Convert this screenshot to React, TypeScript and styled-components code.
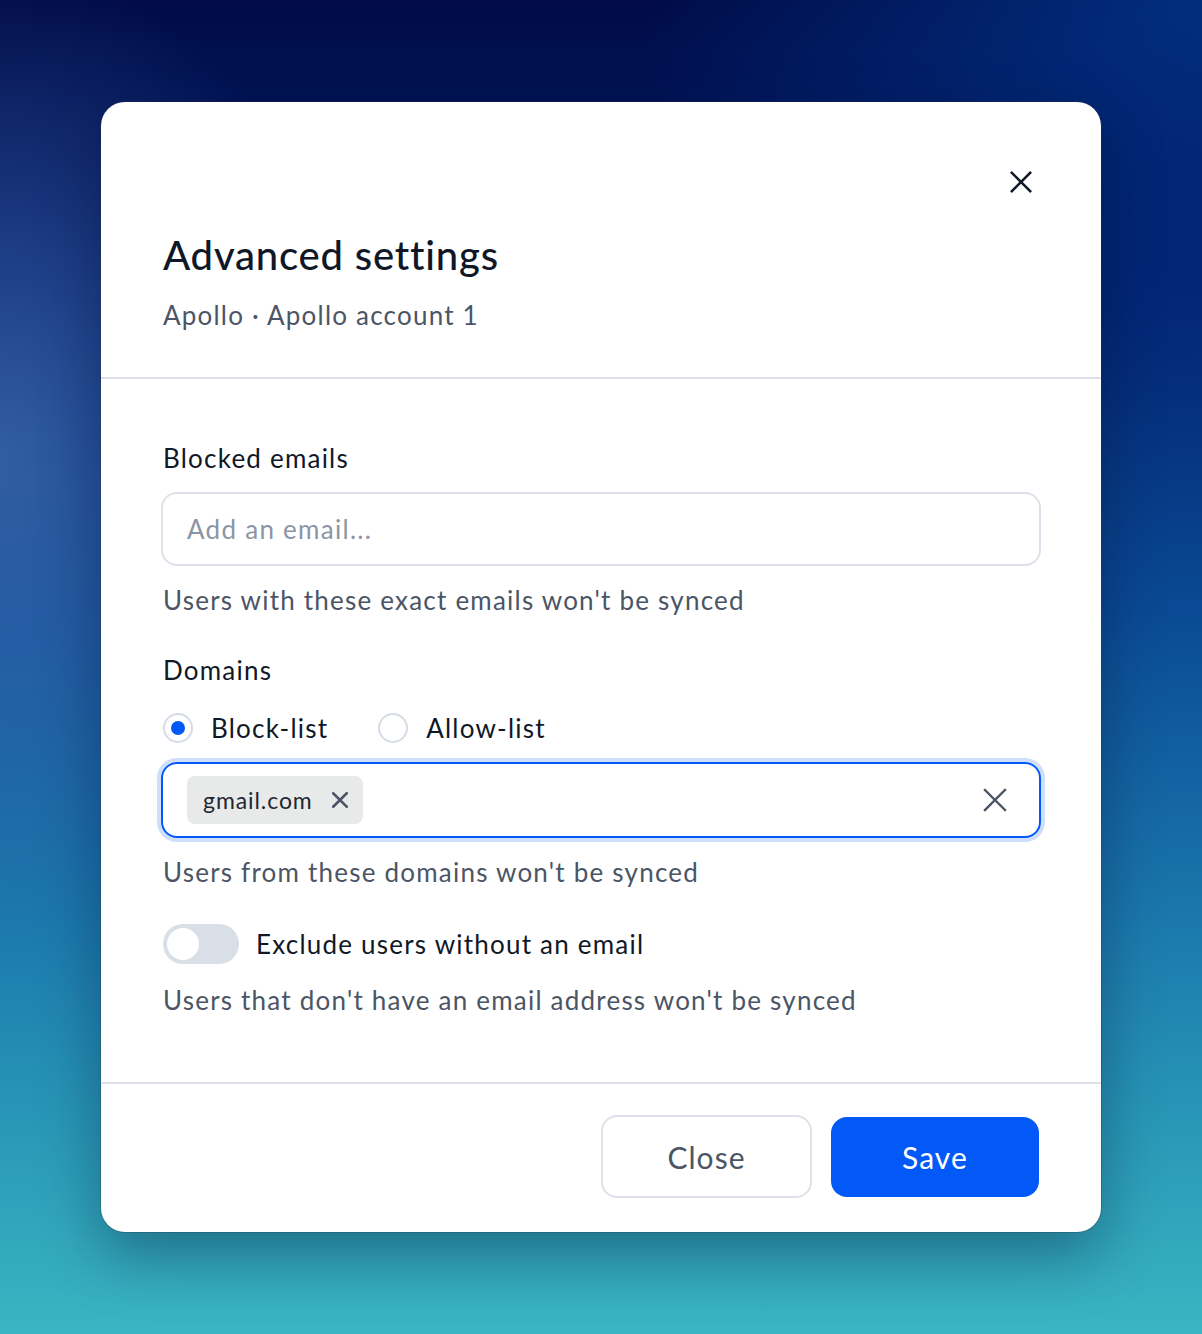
import React, { useState } from "react";
import styled, { createGlobalStyle } from "styled-components";

const GlobalStyle = createGlobalStyle`
  html, body {
    margin: 0;
    padding: 0;
  }
  body {
    font-family: Lato, "Noto Sans", "Liberation Sans", sans-serif;
    letter-spacing: 0.076em;
    -webkit-font-smoothing: antialiased;
  }
  * {
    box-sizing: border-box;
  }
`;

const Backdrop = styled.div`
  min-height: 1334px;
  display: flex;
  align-items: center;
  justify-content: center;
  background:
    radial-gradient(ellipse 520px 700px at 0% 34%, rgba(86, 124, 190, 0.55), rgba(86, 124, 190, 0) 70%),
    radial-gradient(ellipse 700px 500px at 100% 0%, rgba(2, 60, 150, 0.7), rgba(2, 60, 150, 0) 80%),
    linear-gradient(180deg, #000b47 0%, #02226f 22%, #0a4a94 46%, #1a76ac 68%, #2a9bb8 86%, #3ab5c2 100%);
`;

const Modal = styled.div`
  width: 1000px;
  background: #ffffff;
  border-radius: 24px;
  box-shadow: 0 0 0 1px rgba(40, 50, 70, 0.25), 0 24px 60px rgba(0, 10, 40, 0.35);
  display: flex;
  flex-direction: column;
  overflow: hidden;
`;

const Header = styled.header`
  padding: 60px 60px 44px 62px;
  border-bottom: 2px solid #dde2ea;
  display: flex;
  flex-direction: column;
`;

const CloseRow = styled.div`
  display: flex;
  justify-content: flex-end;
`;

const IconButton = styled.button<{ $size: number; $color: string }>`
  width: ${(p) => p.$size}px;
  height: ${(p) => p.$size}px;
  border: 0;
  padding: 0;
  background: transparent;
  color: ${(p) => p.$color};
  display: flex;
  align-items: center;
  justify-content: center;
  cursor: pointer;
  flex-shrink: 0;
`;

const Title = styled.h1`
  margin: 29px 0 0;
  font-size: 40px;
  line-height: 48px;
  font-weight: 500;
  letter-spacing: 0.02em;
  color: #101828;
`;

const Subtitle = styled.div`
  margin-top: 18px;
  font-size: 26px;
  line-height: 36px;
  color: #4b5565;
`;

const Body = styled.div`
  padding: 61px 60px 64px 60px;
  display: flex;
  flex-direction: column;
  gap: 34px;
`;

const Field = styled.div`
  display: flex;
  flex-direction: column;
  gap: 16px;
`;

const Label = styled.div`
  font-size: 26px;
  line-height: 36px;
  color: #101828;
  padding-left: 2px;
`;

const Helper = styled.div`
  font-size: 26px;
  line-height: 36px;
  color: #4b5565;
  padding-left: 2px;
`;

const TextInput = styled.input`
  height: 74px;
  width: 100%;
  border: 2px solid #dde2ea;
  border-radius: 16px;
  padding: 0 24px;
  font-family: inherit;
  font-size: 26px;
  letter-spacing: 0.049em;
  color: #101828;
  outline: none;
  &::placeholder {
    color: #8b95a5;
  }
`;

const RadioGroup = styled.div`
  display: flex;
  align-items: center;
  gap: 50px;
  margin: 9px 0 3px 2px;
`;

const RadioOption = styled.label`
  display: flex;
  align-items: center;
  gap: 18px;
  font-size: 26px;
  line-height: 30px;
  color: #101828;
  cursor: pointer;
`;

const RadioCircle = styled.span<{ $checked: boolean }>`
  width: 30px;
  height: 30px;
  border-radius: 50%;
  border: 2px solid #d6dce6;
  background: #ffffff;
  display: flex;
  align-items: center;
  justify-content: center;
  &::after {
    content: "";
    width: 14px;
    height: 14px;
    border-radius: 50%;
    background: ${(p) => (p.$checked ? "#0058f7" : "transparent")};
  }
`;

const TagInput = styled.div`
  height: 76px;
  border: 2px solid #0058f7;
  border-radius: 16px;
  box-shadow: 0 0 0 4px #cfdffb;
  display: flex;
  align-items: center;
  padding: 0 32px 0 24px;
  gap: 12px;
`;

const Tag = styled.span`
  height: 48px;
  display: inline-flex;
  align-items: center;
  gap: 19px;
  padding: 0 15px 0 16px;
  background: #e8eae9;
  border-radius: 8px;
  font-size: 23px;
  letter-spacing: 0.04em;
  color: #1f2733;
`;

const Spacer = styled.div`
  flex: 1;
`;

const ToggleRow = styled.div`
  display: flex;
  align-items: center;
  gap: 17px;
  font-size: 26px;
  color: #101828;
  padding-left: 2px;
`;

const Toggle = styled.button<{ $on: boolean }>`
  width: 76px;
  height: 40px;
  border: 0;
  border-radius: 20px;
  padding: 4px;
  background: ${(p) => (p.$on ? "#0058f7" : "#d9dfe7")};
  display: flex;
  justify-content: ${(p) => (p.$on ? "flex-end" : "flex-start")};
  cursor: pointer;
  &::after {
    content: "";
    width: 32px;
    height: 32px;
    border-radius: 50%;
    background: #ffffff;
  }
`;

const ToggleField = styled.div`
  display: flex;
  flex-direction: column;
  gap: 18px;
`;

const Footer = styled.footer`
  border-top: 2px solid #dde2ea;
  padding: 31px 62px 34px;
  display: flex;
  justify-content: flex-end;
  align-items: center;
  gap: 19px;
`;

const Button = styled.button<{ $primary?: boolean }>`
  height: ${(p) => (p.$primary ? 80 : 83)}px;
  width: ${(p) => (p.$primary ? 208 : 211)}px;
  border-radius: 16px;
  border: ${(p) => (p.$primary ? "0" : "2px solid #dde2ea")};
  background: ${(p) => (p.$primary ? "#0259f7" : "#ffffff")};
  color: ${(p) => (p.$primary ? "#ffffff" : "#4b5565")};
  font-family: inherit;
  font-size: 30px;
  letter-spacing: 0.035em;
  cursor: pointer;
`;

const XIcon = ({ size, stroke }: { size: number; stroke: number }) => (
  <svg width={size} height={size} viewBox="0 0 24 24" fill="none">
    <path
      d="M2 2L22 22M22 2L2 22"
      stroke="currentColor"
      strokeWidth={stroke}
      strokeLinecap="square"
    />
  </svg>
);

export default function App() {
  const [mode, setMode] = useState<"block" | "allow">("block");
  const [exclude, setExclude] = useState(false);

  return (
    <>
      <GlobalStyle />
      <Backdrop>
        <Modal>
          <Header>
            <CloseRow>
              <IconButton $size={40} $color="#111a27" aria-label="Close">
                <XIcon size={22} stroke={2.8} />
              </IconButton>
            </CloseRow>
            <Title>Advanced settings</Title>
            <Subtitle>Apollo · Apollo account 1</Subtitle>
          </Header>

          <Body>
            <Field>
              <Label>Blocked emails</Label>
              <TextInput placeholder="Add an email..." />
              <Helper>Users with these exact emails won't be synced</Helper>
            </Field>

            <Field>
              <Label>Domains</Label>
              <RadioGroup>
                <RadioOption onClick={() => setMode("block")}>
                  <RadioCircle $checked={mode === "block"} />
                  Block-list
                </RadioOption>
                <RadioOption onClick={() => setMode("allow")}>
                  <RadioCircle $checked={mode === "allow"} />
                  Allow-list
                </RadioOption>
              </RadioGroup>
              <TagInput>
                <Tag>
                  gmail.com
                  <IconButton $size={16} $color="#4b5565" aria-label="Remove">
                    <XIcon size={16} stroke={4} />
                  </IconButton>
                </Tag>
                <Spacer />
                <IconButton $size={24} $color="#4b5565" aria-label="Clear">
                  <XIcon size={24} stroke={2.4} />
                </IconButton>
              </TagInput>
              <Helper>Users from these domains won't be synced</Helper>
            </Field>

            <ToggleField>
              <ToggleRow>
                <Toggle $on={exclude} onClick={() => setExclude(!exclude)} />
                Exclude users without an email
              </ToggleRow>
              <Helper>Users that don't have an email address won't be synced</Helper>
            </ToggleField>
          </Body>

          <Footer>
            <Button>Close</Button>
            <Button $primary>Save</Button>
          </Footer>
        </Modal>
      </Backdrop>
    </>
  );
}
